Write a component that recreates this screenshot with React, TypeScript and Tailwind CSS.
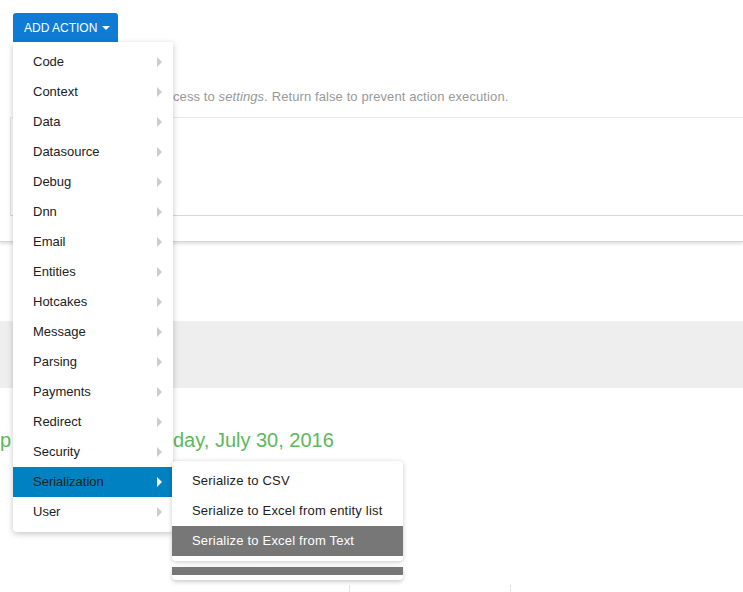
import React from 'react';

const groups = [
  'Code',
  'Context',
  'Data',
  'Datasource',
  'Debug',
  'Dnn',
  'Email',
  'Entities',
  'Hotcakes',
  'Message',
  'Parsing',
  'Payments',
  'Redirect',
  'Security',
  'Serialization',
  'User',
];

const serializeActions = [
  'Serialize to CSV',
  'Serialize to Excel from entity list',
  'Serialize to Excel from Text',
];

const Caret: React.FC<{ active?: boolean }> = ({ active }) => (
  <span
    className={
      active
        ? 'block w-0 h-0 border-y-[5px] border-y-transparent border-l-[5px] border-l-white'
        : 'block w-0 h-0 border-y-[5px] border-y-transparent border-l-[5px] border-l-[#cccccc]'
    }
  />
);

const App: React.FC = () => {
  return (
    <div className="relative w-[743px] h-[592px] overflow-hidden bg-white font-['Liberation_Sans',Arial,sans-serif]">
      {/* toolbar */}
      <div className="pl-[13px] pt-[13px]">
        <button className="flex items-center gap-[5px] w-[105px] h-[29px] pl-[11px] rounded-t-[3px] bg-[#0f7bd5] text-white text-[12px] leading-none">
          ADD ACTION
          <span className="block w-0 h-0 border-x-[4px] border-x-transparent border-t-[4px] border-t-white mt-[1px]" />
        </button>
      </div>

      {/* page content behind the menu */}
      <p className="mt-[46px] pl-[173px] text-[13px] leading-[18px] tracking-[0.1px] text-[#999999] whitespace-nowrap">
        cess to <em>settings</em>. Return false to prevent action execution.
      </p>

      <div className="mt-[11px] ml-[10px] h-[99px] border-t border-l border-b border-t-[#e8e8e8] border-l-[#e5e5e5] border-b-[#d9d9d9]" />
      <div className="h-[26px] border-b border-[#d6d6d6] shadow-[0_2px_3px_rgba(0,0,0,0.12)]" />

      <div className="mt-[79px] h-[67px] bg-[#eeeeee]" />

      <div className="mt-[40px] flex text-[20px] leading-[24px] text-[#5cb85c] whitespace-nowrap">
        <span className="w-[173px]">p</span>
        <span>day, July 30, 2016</span>
      </div>

      <div className="mt-[133px] ml-[349px] w-[162px] h-[10px] border-x border-[#e3e3e3]" />

      {/* dropdown */}
      <div className="absolute left-[13px] top-[42px] w-[160px] py-[5px] bg-white rounded-b-[4px] shadow-[0_2px_6px_rgba(0,0,0,0.22)]">
        {groups.map((g) => {
          const active = g === 'Serialization';
          return (
            <div
              key={g}
              className={
                active
                  ? 'flex items-center justify-between h-[30px] pl-[20px] pr-[11px] bg-[#0081c2] text-[13px] text-[#222222]'
                  : 'flex items-center justify-between h-[30px] pl-[20px] pr-[11px] text-[13px] text-[#222222]'
              }
            >
              <span>{g}</span>
              <Caret active={active} />
            </div>
          );
        })}
      </div>

      {/* submenu */}
      <div className="absolute left-[172px] top-[461px] w-[231px] py-[5px] bg-white rounded-[4px] shadow-[0_1px_5px_rgba(0,0,0,0.22)]">
        {serializeActions.map((a, i) => (
          <div
            key={a}
            className={
              i === 2
                ? 'flex items-center h-[30px] pl-[20px] bg-[#777777] text-[13px] tracking-[0.2px] text-white'
                : 'flex items-center h-[30px] pl-[20px] text-[13px] tracking-[0.2px] text-[#222222]'
            }
          >
            {a}
          </div>
        ))}
      </div>
      <div className="absolute left-[172px] top-[567px] w-[231px] h-[13px] bg-white rounded-b-[4px] shadow-[0_2px_4px_rgba(0,0,0,0.2)]">
        <div className="h-[8px] bg-[#777777]" />
      </div>
    </div>
  );
};

export default App;
